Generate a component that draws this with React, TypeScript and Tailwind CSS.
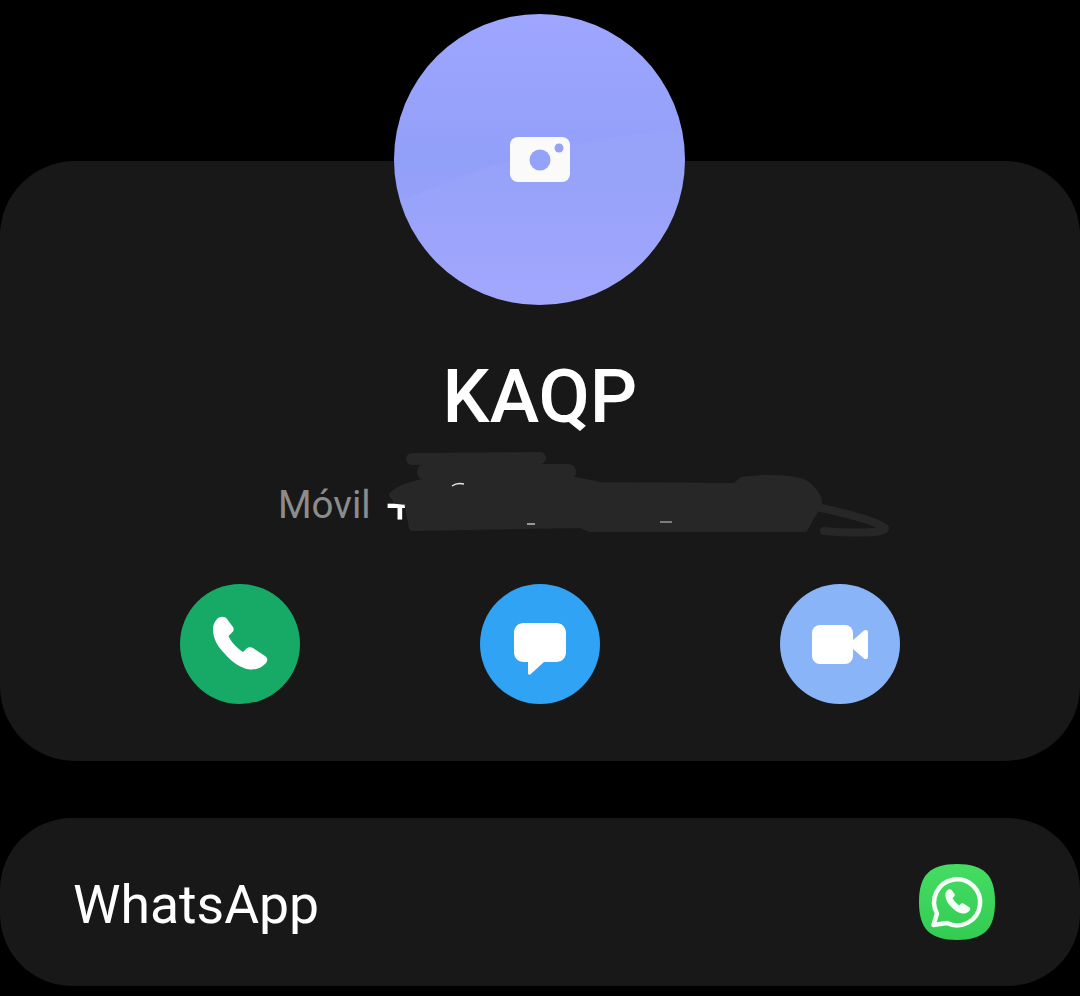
import React from 'react';

const phonePath =
  'M7 5C10 2 15 2 17 5L23 13C24 15 24 17 22 18.500L18.500 22C21 28 27 34 33 38L36.500 34.500C38.500 33 41 33 43 34L55 42C58 44 58 47 55 50C51 54 46 56 40 55.500C31 54.500 22 48 15 40C8 33 3 25 3 15C3 11 4.500 8 7 5Z';

const PhoneIcon = () => (
  <svg width="60" height="60" viewBox="0 0 60 60">
    <path d={phonePath} fill="#fff" />
  </svg>
);

const MessageIcon = () => (
  <svg className="mt-[9px]" width="52" height="52" viewBox="0 0 52 52">
    <path
      d="M10 0h32c6 0 10 4 10 10v19c0 6-4 10-10 10H30L16.500 51.200c-1 .9-2.500.3-2.500-1V39h-4C4 39 0 35 0 29V10C0 4 4 0 10 0z"
      fill="#fff"
    />
  </svg>
);

const VideoIcon = () => (
  <svg width="56" height="39" viewBox="0 0 56 39">
    <rect x="0" y="0" width="41" height="39" rx="8" fill="#fff" />
    <path
      d="M41 15L52 5.500c1.500-1.200 4-.3 4 1.800v24.400c0 2.100-2.500 3-4 1.800L41 24z"
      fill="#fff"
    />
  </svg>
);

const WhatsAppIcon = () => (
  <svg width="76" height="76" viewBox="0 0 76 76">
    <defs>
      <linearGradient id="wa" x1="0" y1="0" x2="0" y2="1">
        <stop offset="0" stopColor="#45dc64" />
        <stop offset="1" stopColor="#33cc52" />
      </linearGradient>
    </defs>
    <path d="M38 0C65 0 76 11 76 38S65 76 38 76 0 65 0 38 11 0 38 0z" fill="url(#wa)" />
    <path
      d="M14.500 61L18 49.500A23 23 0 1 1 28 59z"
      fill="none"
      stroke="#f4fff6"
      strokeWidth="4.500"
      strokeLinejoin="round"
    />
    <path d={phonePath} fill="#f4fff6" transform="translate(25 24) scale(0.46)" />
  </svg>
);

// hand drawn blur over the phone number
const Scribble = () => (
  <svg
    className="absolute left-[380px] top-[-36px]"
    width="520"
    height="100"
    viewBox="0 0 520 100"
    fill="none"
  >
    <g stroke="#272727" strokeLinecap="round" strokeLinejoin="round">
      <path d="M32 14 L160 13" strokeWidth="12" />
      <path d="M45 27 L188 27" strokeWidth="16" />
      <path
        d="M12 50C20 42 35 38 50 36L190 34L220 40L355 41L362 35C380 32 415 32 425 38C435 45 442 55 438 62C432 70 428 78 425 84L210 84L200 80L32 83L27 57L17 56Z"
        fill="#272727"
        strokeWidth="6"
      />
      <path d="M436 62C465 68 495 75 505 83C505 89 470 88 444 86" strokeWidth="8" />
    </g>
    <path d="M72 41C76 38 80 38 84 39" stroke="#e8e8e8" strokeWidth="1.500" />
    <path d="M147 79L155 79" stroke="#bdbdbd" strokeWidth="1.500" />
    <path d="M280 77L292 77" stroke="#9a9a9a" strokeWidth="1.500" />
  </svg>
);

const ActionButton = ({ color, children }: { color: string; children: React.ReactNode }) => (
  <div className={`flex h-[120px] w-[120px] items-center justify-center rounded-full ${color}`}>
    {children}
  </div>
);

export default function App() {
  return (
    <div className="flex h-[996px] w-[1080px] flex-col overflow-hidden bg-black font-['Roboto',sans-serif] pt-[161px]">
      {/* Contact card */}
      <div className="relative flex h-[600px] w-full flex-col items-center rounded-[75px] bg-[#181818]">
        <div className="relative -ml-[1px] -mt-[147px] flex h-[291px] w-[291px] shrink-0 items-center justify-center overflow-hidden rounded-full bg-gradient-to-b from-[#9ea6ff] via-[#929ff8] to-[#9fa5fd]">
          <svg className="absolute inset-0" width="291" height="291" viewBox="0 0 291 291">
            <path d="M0 190C70 160 150 125 291 116V291H0Z" fill="#ffffff" fillOpacity="0.03" />
          </svg>
          <svg className="relative ml-[1px]" width="60" height="46" viewBox="0 0 60 46">
            <rect x="0" y="0" width="60" height="45" rx="8" fill="#fafafa" />
            <circle cx="30" cy="23" r="10.500" fill="#95a2f9" />
            <circle cx="49" cy="11" r="4.500" fill="#95a2f9" />
          </svg>
        </div>

        <h1 className="mt-[47px] text-[74.5px] font-medium leading-[90px] text-white">KAQP</h1>

        <div className="relative mt-[39px] flex h-[48px] w-[1080px] items-center pl-[278px] text-[38.5px] text-[#8c8c8c]">
          <span>Móvil</span>
          <span className="ml-[15px] pt-[2px] text-[50px] leading-none text-white">+</span>
          <Scribble />
        </div>

        <div className="mt-[55px] flex gap-[180px]">
          <ActionButton color="bg-[#17aa66]">
            <PhoneIcon />
          </ActionButton>
          <ActionButton color="bg-[#31a3f4]">
            <MessageIcon />
          </ActionButton>
          <ActionButton color="bg-[#8ab4f8]">
            <VideoIcon />
          </ActionButton>
        </div>
      </div>

      {/* WhatsApp row */}
      <div className="mt-[57px] flex h-[168px] w-full items-center justify-between rounded-[72px] bg-[#181818] pl-[73px] pr-[85px]">
        <span className="pt-[5px] text-[53.5px] leading-none text-white">WhatsApp</span>
        <WhatsAppIcon />
      </div>
    </div>
  );
}
